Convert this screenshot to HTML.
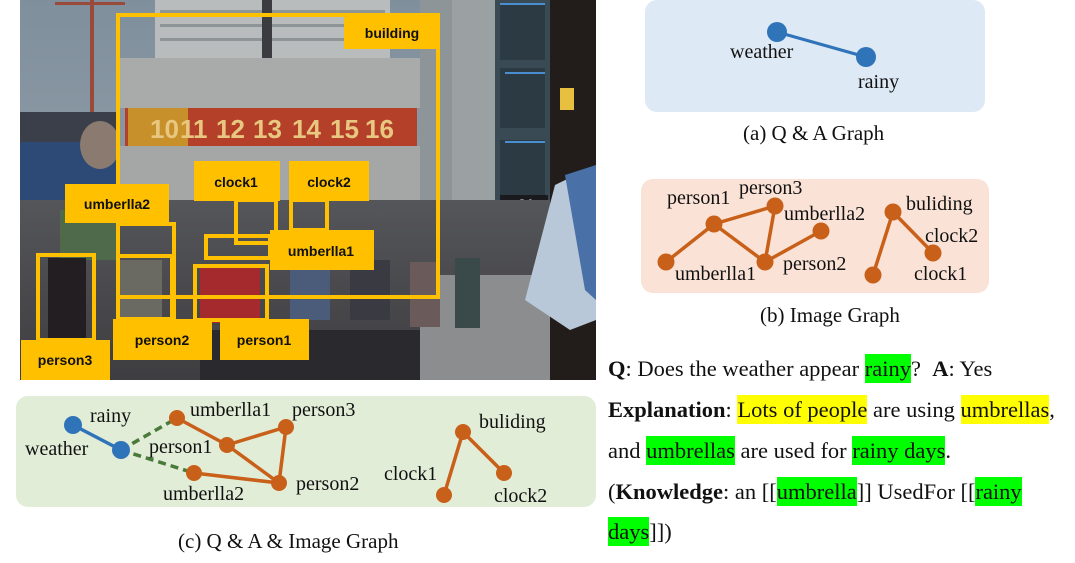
<!DOCTYPE html>
<html><head><meta charset="utf-8"><style>
html,body{margin:0;padding:0;background:#fff;width:1075px;height:563px;overflow:hidden}
.t{position:absolute;font-family:"Liberation Serif",serif;font-size:22.5px;color:#111;white-space:nowrap;line-height:25px}
.y{background:#ffff00;padding:2px 0}
.g{background:#00ff00;padding:2px 0}
</style></head><body>
<svg width="1075" height="563" style="position:absolute;left:0;top:0" xmlns="http://www.w3.org/2000/svg">
<defs>
<linearGradient id="sky" x1="0" y1="0" x2="0" y2="1"><stop offset="0" stop-color="#7f8f9c"/><stop offset="1" stop-color="#9aa6ae"/></linearGradient>
<linearGradient id="gnd" x1="0" y1="0" x2="0" y2="1"><stop offset="0" stop-color="#55565a"/><stop offset="1" stop-color="#3e3d40"/></linearGradient>
<clipPath id="ph"><rect x="20" y="0" width="576" height="380"/></clipPath>
</defs>
<g clip-path="url(#ph)">
<rect x="20" y="0" width="576" height="380" fill="url(#sky)"/>
<rect x="90" y="0" width="4" height="120" fill="#9a4a3a"/>
<rect x="55" y="2" width="70" height="3" fill="#9a4a3a"/>
<rect x="155" y="0" width="235" height="58" fill="#b9bcbd"/>
<g fill="#8e9597"><rect x="160" y="10" width="225" height="3"/><rect x="160" y="24" width="225" height="3"/><rect x="160" y="38" width="225" height="3"/></g>
<rect x="262" y="0" width="10" height="58" fill="#3a3c40"/>
<rect x="20" y="112" width="100" height="95" fill="#2d4a76"/>
<rect x="20" y="112" width="100" height="30" fill="#3a3f4a"/>
<ellipse cx="100" cy="145" rx="20" ry="24" fill="#8a7a70"/>
<rect x="120" y="58" width="302" height="50" fill="#a9abab"/>
<rect x="125" y="108" width="292" height="38" fill="#b5402a"/>
<rect x="128" y="108" width="60" height="38" fill="#c8902a"/>
<g font-family="Liberation Sans,sans-serif" font-weight="bold" font-size="26" fill="#e8c880">
<text x="150" y="138">10</text><text x="180" y="138">11</text><text x="216" y="138">12</text><text x="253" y="138">13</text><text x="292" y="138">14</text><text x="330" y="138">15</text><text x="365" y="138">16</text></g>
<rect x="120" y="146" width="302" height="55" fill="#a5a7a6"/>
<rect x="420" y="0" width="40" height="260" fill="#8e9599"/>
<rect x="452" y="0" width="45" height="260" fill="#9ba1a2"/>
<rect x="495" y="0" width="55" height="250" fill="#3a4a55"/>
<rect x="500" y="5" width="45" height="55" fill="#2c3a44"/><rect x="500" y="68" width="45" height="60" fill="#2c3a44"/><rect x="500" y="140" width="45" height="60" fill="#2c3a44"/>
<rect x="500" y="3" width="45" height="2" fill="#4a8ed0"/><rect x="505" y="72" width="40" height="2" fill="#4a8ed0"/><rect x="505" y="141" width="40" height="2" fill="#4a8ed0"/>
<rect x="500" y="195" width="48" height="15" fill="#1a1a1e"/>
<text x="518" y="208" font-family="Liberation Sans,sans-serif" font-weight="bold" font-size="12" fill="#fff">SA</text>
<rect x="490" y="218" width="58" height="20" fill="#d8662a"/>
<rect x="20" y="200" width="530" height="180" fill="url(#gnd)"/>
<rect x="60" y="210" width="60" height="50" fill="#4e6a4a"/>
<rect x="420" y="275" width="130" height="105" fill="#8b8d8f"/>
<rect x="48" y="258" width="38" height="80" fill="#231e22"/>
<rect x="120" y="260" width="42" height="60" fill="#6a6a62"/>
<rect x="200" y="268" width="60" height="55" fill="#a42a2e"/>
<rect x="290" y="270" width="40" height="50" fill="#4a5c7a"/>
<rect x="350" y="260" width="40" height="60" fill="#3a3a42"/>
<rect x="410" y="262" width="30" height="65" fill="#6a5a5a"/>
<rect x="455" y="258" width="25" height="70" fill="#3a4a4a"/>
<rect x="200" y="330" width="220" height="50" fill="#2a2a2e"/>
<rect x="550" y="0" width="46" height="380" fill="#221c1a"/>
<rect x="560" y="88" width="14" height="22" fill="#e8c040"/>
<polygon points="525,300 555,185 596,165 596,320 570,330" fill="#b8c8d8"/>
<polygon points="565,175 596,165 596,300 585,290" fill="#4a70a8"/>
</g>
<g fill="none" stroke="#ffc000" stroke-width="4">
<rect x="118" y="15" width="320" height="282"/>
<rect x="236" y="200" width="40" height="43"/>
<rect x="291" y="200" width="36" height="30"/>
<rect x="206" y="236" width="64" height="22"/>
<rect x="118" y="224" width="56" height="95"/>
<rect x="118" y="256" width="54" height="64"/>
<rect x="195" y="266" width="72" height="54"/>
<rect x="38" y="255" width="56" height="85"/>
</g>
<g fill="#ffc000">
<rect x="344" y="13" width="96" height="36"/>
<rect x="194" y="161" width="86" height="40"/>
<rect x="289" y="161" width="80" height="40"/>
<rect x="65" y="184" width="104" height="39"/>
<rect x="270" y="230" width="104" height="40"/>
<rect x="21" y="340" width="89" height="40"/>
<rect x="113" y="319" width="99" height="41"/>
<rect x="220" y="319" width="89" height="41"/>
</g>
<g font-family="Liberation Sans,sans-serif" font-weight="bold" font-size="14" fill="#111" text-anchor="middle">
<text x="392" y="38">building</text>
<text x="236" y="187">clock1</text>
<text x="329" y="187">clock2</text>
<text x="117" y="209">umberlla2</text>
<text x="321" y="256">umberlla1</text>
<text x="65" y="365">person3</text>
<text x="162" y="345">person2</text>
<text x="264" y="345">person1</text>
</g>
<rect x="645" y="0" width="340" height="112" rx="12" fill="#dde9f5"/>
<line x1="777" y1="32" x2="866" y2="57" stroke="#2f74b8" stroke-width="3"/>
<circle cx="777" cy="32" r="10" fill="#2f74b8"/><circle cx="866" cy="57" r="10" fill="#2f74b8"/>
<g font-family="Liberation Serif,serif" font-size="20" fill="#111">
<text x="730" y="58">weather</text><text x="858" y="88">rainy</text>
<text x="743" y="140" font-size="21">(a) Q &amp; A Graph</text>
</g>
<rect x="641" y="179" width="348" height="114" rx="12" fill="#fae3d6"/>
<g stroke="#c8601a" stroke-width="3.5">
<line x1="714" y1="224" x2="775" y2="206"/><line x1="714" y1="224" x2="666" y2="262"/><line x1="714" y1="224" x2="765" y2="262"/>
<line x1="775" y1="206" x2="765" y2="262"/><line x1="765" y1="262" x2="821" y2="231"/>
<line x1="893" y1="212" x2="933" y2="253"/><line x1="893" y1="212" x2="873" y2="275"/>
</g>
<g fill="#c8601a">
<circle cx="714" cy="224" r="8.5"/><circle cx="775" cy="206" r="8.5"/><circle cx="821" cy="231" r="8.5"/><circle cx="666" cy="262" r="8.5"/><circle cx="765" cy="262" r="8.5"/><circle cx="893" cy="212" r="8.5"/><circle cx="933" cy="253" r="8.5"/><circle cx="873" cy="275" r="8.5"/>
</g>
<g font-family="Liberation Serif,serif" font-size="20" fill="#111">
<text x="667" y="204">person1</text><text x="739" y="194">person3</text><text x="784" y="220">umberlla2</text>
<text x="675" y="280">umberlla1</text><text x="783" y="270">person2</text>
<text x="906" y="210">buliding</text><text x="925" y="242">clock2</text><text x="914" y="280">clock1</text>
<text x="760" y="322" font-size="21">(b) Image Graph</text>
</g>
<rect x="16" y="396" width="580" height="111" rx="12" fill="#e2edd8"/>
<line x1="73" y1="425" x2="121" y2="450" stroke="#2f74b8" stroke-width="3.5"/>
<g stroke="#4a7a3a" stroke-width="3.5" stroke-dasharray="8,5">
<line x1="121" y1="450" x2="177" y2="418"/><line x1="121" y1="450" x2="194" y2="473"/></g>
<g stroke="#c8601a" stroke-width="3.5">
<line x1="177" y1="418" x2="227" y2="445"/><line x1="227" y1="445" x2="286" y2="427"/><line x1="227" y1="445" x2="279" y2="483"/>
<line x1="286" y1="427" x2="279" y2="483"/><line x1="194" y1="473" x2="279" y2="483"/>
<line x1="463" y1="432" x2="444" y2="495"/><line x1="463" y1="432" x2="504" y2="473"/>
</g>
<g fill="#2f74b8"><circle cx="73" cy="425" r="9"/><circle cx="121" cy="450" r="9"/></g>
<g fill="#c8601a">
<circle cx="177" cy="418" r="8"/><circle cx="227" cy="445" r="8"/><circle cx="286" cy="427" r="8"/><circle cx="194" cy="473" r="8"/><circle cx="279" cy="483" r="8"/><circle cx="463" cy="432" r="8"/><circle cx="444" cy="495" r="8"/><circle cx="504" cy="473" r="8"/>
</g>
<g font-family="Liberation Serif,serif" font-size="20" fill="#111">
<text x="90" y="422">rainy</text><text x="25" y="455">weather</text>
<text x="190" y="416">umberlla1</text><text x="292" y="416">person3</text>
<text x="149" y="453">person1</text><text x="163" y="500">umberlla2</text><text x="296" y="490">person2</text>
<text x="479" y="428">buliding</text><text x="384" y="480">clock1</text><text x="494" y="502">clock2</text>
<text x="178" y="548" font-size="21">(c) Q &amp; A &amp; Image Graph</text>
</g>
</svg>
<div class="t" style="left:608px;top:356px"><b>Q</b>: Does the weather appear <span class="g">rainy</span>?&nbsp; <b>A</b>: Yes</div>
<div class="t" style="left:608px;top:397px"><b>Explanation</b>: <span class="y">Lots of people</span> are using <span class="y">umbrellas</span>,</div>
<div class="t" style="left:608px;top:438px">and <span class="g">umbrellas</span> are used for <span class="g">rainy days</span>.</div>
<div class="t" style="left:608px;top:479px">(<b>Knowledge</b>: an [[<span class="g">umbrella</span>]] UsedFor [[<span class="g">rainy</span></div>
<div class="t" style="left:608px;top:519px"><span class="g">days</span>]])</div>
</body></html>
